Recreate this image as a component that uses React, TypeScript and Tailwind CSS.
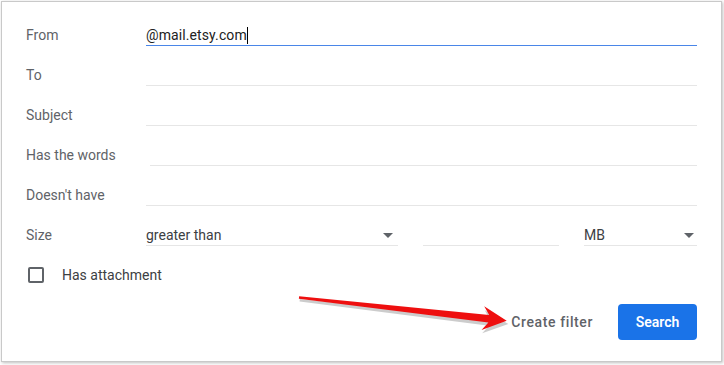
import React from "react";

const font = { fontFamily: "Roboto, 'Noto Sans', Arial, sans-serif" };

function Caret() {
  return (
    <svg width="10" height="5" viewBox="0 0 10 5" className="shrink-0">
      <path d="M0 0h10L5 5z" fill="#5f6368" />
    </svg>
  );
}

function Field({ label, offset = false }: { label: string; offset?: boolean }) {
  return (
    <div className="flex h-10">
      <div className="w-[120px] shrink-0 pt-[10px] text-[14px] leading-5 text-[#5f6368]">{label}</div>
      <div className={`h-[31px] flex-1 border-b border-[#e6e6e6] ${offset ? "ml-1" : ""}`} />
    </div>
  );
}

export default function App() {
  return (
    <div className="relative h-[365px] w-[724px] overflow-hidden bg-white" style={font}>
      <div className="ml-px mt-px h-[361px] w-[721px] border border-[#c9c9c9] bg-white pl-[24px] pr-[24px] pt-[13px] shadow-[1px_1px_3px_rgba(0,0,0,0.25)]">
        {/* From (focused) */}
        <div className="flex h-10">
          <div className="w-[120px] shrink-0 pt-[10px] text-[14px] leading-5 text-[#5f6368]">From</div>
          <div className="flex h-[31px] flex-1 items-start border-b border-[#4a86e8] pt-[10px] text-[14px] leading-5 text-[#222]">
            <span className="tracking-[0.1px]">@mail.etsy.com</span>
            <span className="mt-[2px] h-[17px] w-px bg-black" />
          </div>
        </div>
        <Field label="To" />
        <Field label="Subject" />
        <Field label="Has the words" offset />
        <Field label="Doesn't have" />

        {/* Size */}
        <div className="flex h-10">
          <div className="w-[120px] shrink-0 pt-[10px] text-[14px] leading-5 text-[#5f6368]">Size</div>
          <div className="flex flex-1 gap-[25px]">
            <div className="flex h-[31px] w-[252px] items-center justify-between border-b border-[#e6e6e6] pr-[5px] pt-[10px] text-[14px] leading-5 text-[#3c4043]">
              <span>greater than</span>
              <Caret />
            </div>
            <div className="h-[31px] w-[136px] border-b border-[#e6e6e6]" />
            <div className="flex h-[31px] flex-1 items-center justify-between border-b border-[#e6e6e6] pr-[3px] pt-[10px] text-[14px] leading-5 text-[#3c4043]">
              <span>MB</span>
              <Caret />
            </div>
          </div>
        </div>

        {/* Has attachment */}
        <div className="flex h-10 items-center">
          <div className="ml-[2px] h-[16px] w-[16px] rounded-[2px] border-2 border-[#5f6368]" />
          <span className="ml-[18px] text-[14px] leading-5 text-[#3c4043]">Has attachment</span>
        </div>

        {/* Actions */}
        <div className="mt-[9px] flex items-center justify-end gap-[25px]">
          <button className="text-[14px] font-medium tracking-[0.6px] text-[#5f6368]">Create filter</button>
          <button className="h-9 w-[79px] rounded-[4px] bg-[#1a73e8] text-[14px] font-semibold text-white">Search</button>
        </div>
      </div>

      {/* annotation arrow */}
      <svg className="pointer-events-none absolute left-0 top-0" width="724" height="365" viewBox="0 0 724 365">
        <g transform="rotate(6.4 299 297.5)">
          <polygon
            points="299,297.5 490,296.5 484,288 509,299 484,311 490,303 299,300"
            fill="#000"
            opacity="0.2"
            transform="translate(1 1.5)"
          />
          <polygon points="299,296.3 490,293.8 484,285.5 508,297.5 484,309.5 490,301.2 299,298.7" fill="#ee0f0f" />
        </g>
      </svg>
    </div>
  );
}
